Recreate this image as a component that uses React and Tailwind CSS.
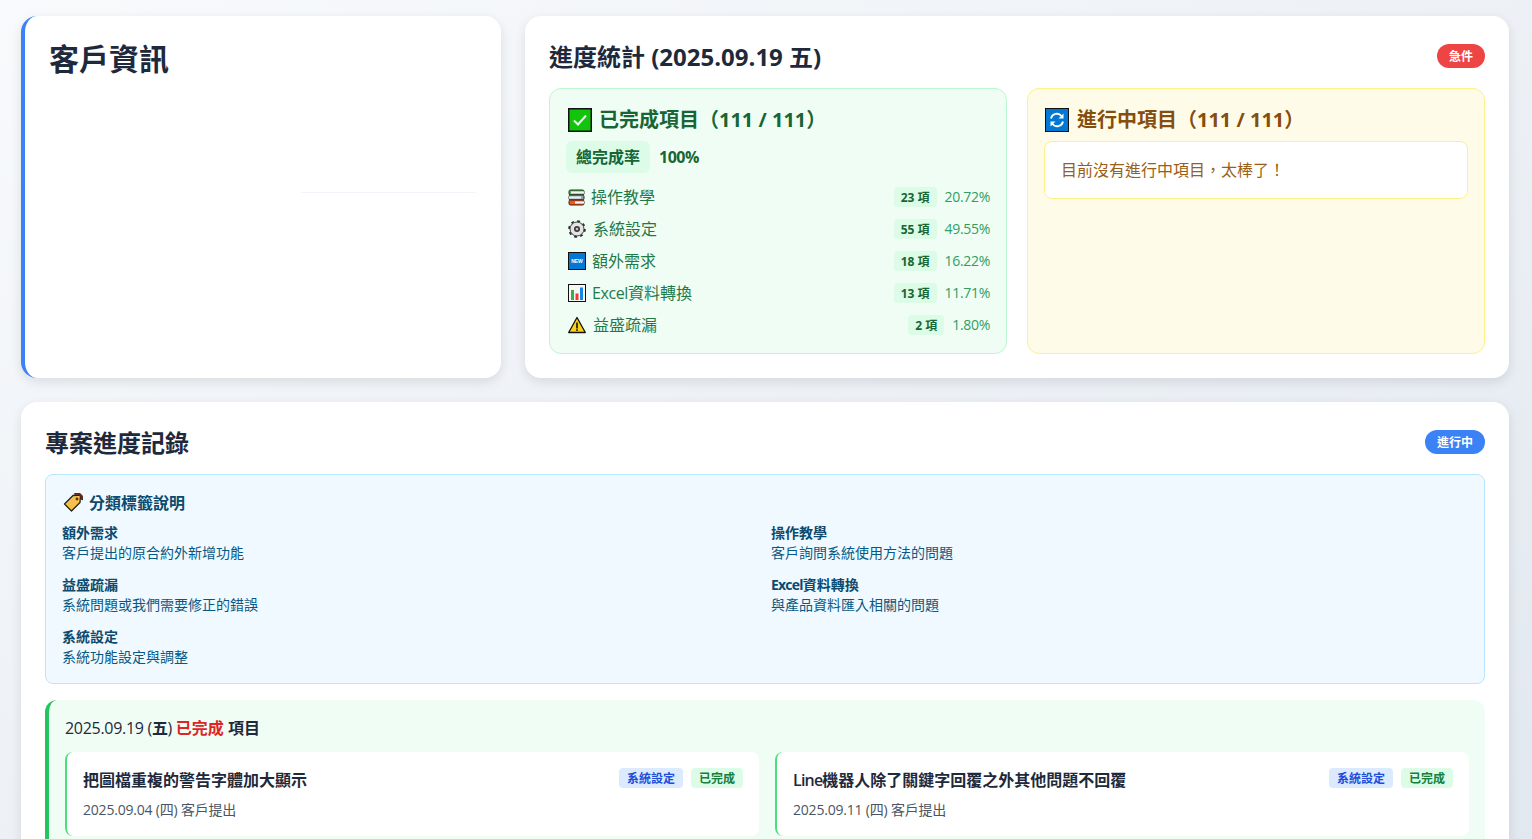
function Check(){return <svg width="24" height="24" viewBox="0 0 24 24" className="shrink-0"><rect x=".75" y=".75" width="22.5" height="22.5" fill="#13c40c" stroke="#111" strokeWidth="1.5"/><path d="M6 12.5l4 4 8-9" fill="none" stroke="#e8ffe8" strokeWidth="2"/></svg>}
function Sync(){return <svg width="24" height="24" viewBox="0 0 24 24" className="shrink-0"><rect x=".5" y=".5" width="23" height="23" fill="#0078d4" stroke="#111"/><path d="M6 10.5a6 6 0 0 1 10.5-2.5M18 13.5a6 6 0 0 1-10.5 2.5" fill="none" stroke="#fff" strokeWidth="1.8"/><path d="M18.5 5.5v5h-5zM5.5 18.5v-5h5z" fill="#fff"/></svg>}
function Books(){return <svg width="17" height="17" viewBox="0 0 17 17"><rect x="1" y="1" width="15" height="5" rx="1.5" fill="#4fb548" stroke="#1a1a1a" strokeWidth=".9"/><rect x="3" y="2.4" width="13" height="2.2" fill="#f4f4f4"/><rect x="1" y="6" width="15" height="5" rx="1.5" fill="#8fa6b4" stroke="#1a1a1a" strokeWidth=".9"/><rect x="1" y="7.4" width="12" height="2.2" fill="#e8eef2"/><rect x="1" y="11" width="15" height="5" rx="1.5" fill="#f0561d" stroke="#1a1a1a" strokeWidth=".9"/><rect x="7" y="12.4" width="9" height="2.2" fill="#f4f4f4"/></svg>}
function Gear(){return <svg width="18" height="18" viewBox="0 0 18 18"><circle cx="9" cy="9" r="7.9" fill="none" stroke="#2a2a2a" strokeWidth="1.8" strokeDasharray="2.8 3.4"/><circle cx="9" cy="9" r="7" fill="#e4e4e4" stroke="#2a2a2a" strokeWidth=".9"/><circle cx="9" cy="9" r="3" fill="#3a3a3a"/><circle cx="9" cy="9" r="1.3" fill="#c4c4c4"/></svg>}
function NewI(){return <svg width="18" height="18" viewBox="0 0 18 18"><rect x=".5" y=".5" width="17" height="17" fill="#0078d4" stroke="#111"/><text x="9" y="10.8" textAnchor="middle" fontSize="5" fontWeight="700" fill="#fff" fontFamily="Liberation Sans">NEW</text></svg>}
function Chart(){return <svg width="18" height="18" viewBox="0 0 18 18"><rect x=".5" y=".5" width="17" height="17" fill="#f7f7f7" stroke="#111"/><rect x="3" y="6" width="3" height="10" fill="#2fb344"/><rect x="7.5" y="9.5" width="3" height="6.5" fill="#ef3b2d"/><rect x="12" y="3.5" width="3" height="12.5" fill="#1787e5"/></svg>}
function Warn(){return <svg width="18" height="18" viewBox="0 0 18 18"><path d="M9 1.5L17.3 16.5H.7z" fill="#fcd116" stroke="#111" strokeWidth="1.3" strokeLinejoin="round"/><rect x="8.2" y="6.5" width="1.6" height="6" fill="#111"/><rect x="8.2" y="13.3" width="1.6" height="1.6" fill="#111"/></svg>}
function Tag(){return <svg width="20" height="20" viewBox="0 0 20 20"><path d="M1.5 11L10 2.5l7.5-.5-.5 7.5-8.5 8.5z" fill="#f7c04a" stroke="#222" strokeWidth="1.3" strokeLinejoin="round"/><path d="M11.5 1.5a5 5 0 0 1 7.5 5.5" fill="none" stroke="#5c2b1a" strokeWidth="2.4"/><circle cx="14" cy="6" r="1.4" fill="#5c2b1a"/></svg>}

const rows=[[Books,"操作教學","23 項","20.72%","w-[23px]"],[Gear,"系統設定","55 項","49.55%","w-[25px]"],[NewI,"額外需求","18 項","16.22%","w-[24px]"],[Chart,<><span className="tracking-[-0.4px]">Excel</span>資料轉換</>,"13 項","11.71%","w-[24px]"],[Warn,"益盛疏漏","2 項","1.80%","w-[25px]"]];
const legend=[["額外需求","客戶提出的原合約外新增功能"],["操作教學","客戶詢問系統使用方法的問題"],["益盛疏漏","系統問題或我們需要修正的錯誤"],[<><span className="tracking-[-0.8px]">Excel</span>資料轉換</>,"與產品資料匯入相關的問題"],["系統設定","系統功能設定與調整"]];
const items=[["把圖檔重複的警告字體加大顯示","2025.09.04 (四) 客戶提出"],[<><span className="font-semibold tracking-[-0.8px]">Line</span>機器人除了關鍵字回覆之外其他問題不回覆</>,"2025.09.11 (四) 客戶提出"]];

export default function App(){
return <div className="h-screen overflow-hidden bg-gradient-to-br from-[#f8fafc] to-[#e2e8f0] pt-4 pl-[21px] pr-[23px] text-[#1e293b] font-['Open_Sans','Noto_Sans_CJK_TC',sans-serif]">
  <div className="grid grid-cols-[480px_1fr] gap-6 h-[362px]">
    <section className="relative bg-white rounded-2xl border-l-4 border-[#3b82f6] shadow-[0_4px_12px_rgba(0,0,0,0.1)] pl-6 pt-[23px]">
      <h1 className="text-3xl leading-[40px] font-bold">客戶資訊</h1>
      <div className="absolute left-[276px] top-[176px] w-[175px] h-px bg-[#f1f5f9]"></div>
    </section>
    <section className="bg-white rounded-2xl shadow-[0_4px_12px_rgba(0,0,0,0.1)] p-6">
      <div className="flex items-center justify-between h-9 -mt-[1px]">
        <h2 className="text-2xl leading-9 font-bold">進度統計 (2025.09.19 五)</h2>
        <span className="rounded-full bg-[#ef4444] text-white text-xs font-bold px-3 h-6 pt-px -mt-[2px] flex items-center">急件</span>
      </div>
      <div className="grid grid-cols-2 gap-5 mt-[13px] h-[266px]">
        <div className="bg-[#f0fdf4] border border-[#bbf7d0] rounded-xl pt-[19px] px-4">
          <div className="flex items-center gap-[7px] h-6 pl-[2px] text-[#166534] text-xl font-bold"><Check/><span>已完成項目（111 / 111）</span></div>
          <div className="flex items-center gap-[9px] mt-[9px] text-[#166534] font-bold text-base">
            <span className="bg-[#dcfce7] rounded-md px-[10px] h-8 flex items-center">總完成率</span><span className="tracking-[-0.5px]">100%</span>
          </div>
          <div className="mt-[8px] flex flex-col">
            {rows.map(([I,n,c,p,w],i)=><div key={i} className="flex items-center h-8 pl-[2px]">
              <span className={w+" flex shrink-0"}><I/></span>
              <span className="text-base text-[#1f7a4a]">{n}</span>
              <span className="ml-auto bg-[#dcfce7] rounded px-[7px] pt-px text-xs font-bold text-[#166534] h-5 flex items-center">{c}</span>
              <span className="ml-2 text-sm tracking-[-0.3px] text-[#2f9e63]">{p}</span>
            </div>)}
          </div>
        </div>
        <div className="bg-[#fefce8] border border-[#fef08a] rounded-xl pt-[19px] px-4">
          <div className="flex items-center gap-2 h-6 pl-[1px] text-[#854d0e] text-xl font-bold"><Sync/><span>進行中項目（111 / 111）</span></div>
          <div className="bg-white border border-[#fef08a] rounded-lg mt-[9px] h-[58px] flex items-center px-4 text-[#9a5f14] text-base">目前沒有進行中項目，太棒了！</div>
        </div>
      </div>
    </section>
  </div>
  <section className="mt-6 bg-white rounded-2xl shadow-[0_4px_12px_rgba(0,0,0,0.1)] p-6">
    <div className="flex items-center justify-between h-9 -mt-[1px]">
      <h2 className="text-2xl leading-9 font-bold">專案進度記錄</h2>
      <span className="rounded-full bg-[#3b82f6] text-white text-xs font-bold px-3 h-6 pt-px -mt-[2px] flex items-center">進行中</span>
    </div>
    <div className="mt-[13px] bg-[#f0f9ff] border border-[#bae6fd] rounded-lg px-4 pt-4 h-[210px] text-[#0c4a6e]">
      <div className="flex items-center gap-[5px] h-6 pl-[1px] font-bold text-base"><span className="w-[21px]"><Tag/></span>分類標籤說明</div>
      <div className="grid grid-cols-2 gap-x-3 mt-[8px]">
        {legend.map(([a,b],i)=><div key={i} className="h-[52px] text-sm leading-5"><div className="font-bold">{a}</div><div className="text-[#075985]">{b}</div></div>)}
      </div>
    </div>
    <div className="mt-4 bg-[#f0fdf4] border-l-4 border-[#22c55e] rounded-xl px-4 pt-4 pb-4">
      <div className="text-base font-bold h-6 flex items-center whitespace-pre"><span className="font-medium tracking-[-0.3px]">2025.09.19 (<span className="font-bold">五</span>) </span><span className="text-[#dc2626]">已完成</span><span> 項目</span></div>
      <div className="grid grid-cols-2 gap-4 mt-3">
        {items.map(([t,d],i)=><div key={i} className="bg-white rounded-lg border-l-2 border-[#4ade80] h-[84px] px-4 pt-4 flex justify-between">
          <div><div className="text-base font-bold leading-6">{t}</div><div className="text-sm text-[#4b5563] mt-2 leading-5 tracking-[-0.2px]">{d}</div></div>
          <div className="flex gap-2 items-start"><span className="bg-[#dbeafe] text-[#1d4ed8] rounded text-xs font-bold px-2 pt-px h-5 flex items-center">系統設定</span><span className="bg-[#dcfce7] text-[#15803d] rounded text-xs font-bold px-2 pt-px h-5 flex items-center">已完成</span></div>
        </div>)}
      </div>
    </div>
  </section>
</div>}
